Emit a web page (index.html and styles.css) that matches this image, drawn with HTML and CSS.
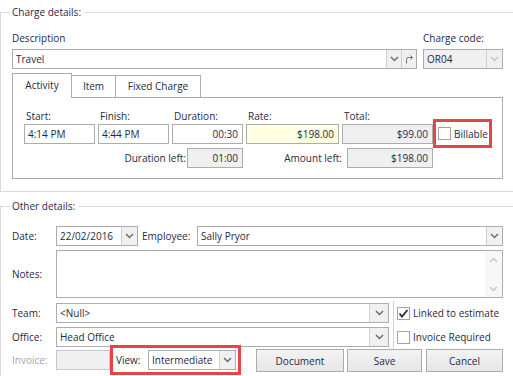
FILE: index.html
```html
<!DOCTYPE html>
<html>
<head>
    <title>Charge details</title>
    <link rel="stylesheet" href="styles.css">
</head>
<body>
    <!-- Charge details -->
    <div class="group charge-group">
        <div class="group-title">Charge details:</div>

        <div class="desc-grid">
            <label class="top-label">Description</label>
            <label class="top-label">Charge code:</label>
            <div class="combo">
                <span class="combo-text">Travel</span>
                <span class="combo-btn"><svg width="9" height="6" viewBox="0 0 9 6"><polyline points="1,1 4.5,4.5 8,1" fill="none" stroke="#6d6d6d" stroke-width="1.5"/></svg></span>
                <span class="combo-btn"><svg width="10" height="10" viewBox="0 0 10 10"><path d="M2.5 9.5 V5.5 Q2.5 3.5 4.5 3.5 H8.5" fill="none" stroke="#6d6d6d" stroke-width="1"/><polyline points="6.5,1.5 8.5,3.5 6.5,5.5" fill="none" stroke="#6d6d6d" stroke-width="1"/></svg></span>
            </div>
            <div class="combo combo-disabled">
                <span class="combo-text">OR04</span>
                <span class="combo-btn btn-wide"><svg width="9" height="6" viewBox="0 0 9 6"><polyline points="1,1 4.5,4.5 8,1" fill="none" stroke="#c6c6c6" stroke-width="1.5"/></svg></span>
            </div>
        </div>

        <div class="tabs">
            <div class="tab tab-activity active">Activity</div>
            <div class="tab tab-item">Item</div>
            <div class="tab tab-fixed">Fixed Charge</div>
        </div>
        <div class="tab-panel">
            <div class="field-row">
                <div class="field f-time">
                    <label>Start:</label>
                    <div class="edit">4:14 PM</div>
                </div>
                <div class="field f-time">
                    <label>Finish:</label>
                    <div class="edit">4:44 PM</div>
                </div>
                <div class="field f-time">
                    <label>Duration:</label>
                    <div class="edit num">00:30</div>
                </div>
                <div class="field f-rate">
                    <label>Rate:</label>
                    <div class="edit num rate">$198.00</div>
                </div>
                <div class="field f-total">
                    <label>Total:</label>
                    <div class="edit num readonly">$99.00</div>
                </div>
                <div class="highlight billable">
                    <span class="check"></span>
                    <span>Billable</span>
                </div>
            </div>
            <div class="left-row">
                <label class="dur-label">Duration left:</label>
                <div class="edit num readonly dur-left">01:00</div>
                <label class="amt-label">Amount left:</label>
                <div class="edit num readonly amt-left">$198.00</div>
            </div>
        </div>
    </div>

    <!-- Other details -->
    <div class="group other-group">
        <div class="group-title">Other details:</div>

        <div class="form-row date-row">
            <label class="row-label">Date:</label>
            <div class="combo date-combo">
                <span class="combo-text">22/02/2016</span>
                <span class="combo-btn btn-wide"><svg width="9" height="6" viewBox="0 0 9 6"><polyline points="1,1 4.5,4.5 8,1" fill="none" stroke="#6d6d6d" stroke-width="1.5"/></svg></span>
            </div>
            <label class="emp-label">Employee:</label>
            <div class="combo emp-combo">
                <span class="combo-text">Sally Pryor</span>
                <span class="combo-btn btn-wide"><svg width="9" height="6" viewBox="0 0 9 6"><polyline points="1,1 4.5,4.5 8,1" fill="none" stroke="#6d6d6d" stroke-width="1.5"/></svg></span>
            </div>
        </div>

        <div class="form-row notes-row">
            <label class="row-label">Notes:</label>
            <div class="memo">
                <div class="memo-text"></div>
                <div class="memo-scroll">
                    <svg width="9" height="6" viewBox="0 0 9 6"><polyline points="1,5 4.5,1.5 8,5" fill="none" stroke="#c6c6c6" stroke-width="1.5"/></svg>
                    <svg width="9" height="6" viewBox="0 0 9 6"><polyline points="1,1 4.5,4.5 8,1" fill="none" stroke="#c6c6c6" stroke-width="1.5"/></svg>
                </div>
            </div>
        </div>

        <div class="team-office">
            <div class="to-fields">
                <div class="form-row">
                    <label class="row-label">Team:</label>
                    <div class="combo to-combo">
                        <span class="combo-text">&lt;Null&gt;</span>
                        <span class="combo-btn btn-team"><svg width="9" height="6" viewBox="0 0 9 6"><polyline points="1,1 4.5,4.5 8,1" fill="none" stroke="#6d6d6d" stroke-width="1.5"/></svg></span>
                    </div>
                </div>
                <div class="form-row office-row">
                    <label class="row-label">Office:</label>
                    <div class="combo to-combo">
                        <span class="combo-text">Head Office</span>
                        <span class="combo-btn btn-team"><svg width="9" height="6" viewBox="0 0 9 6"><polyline points="1,1 4.5,4.5 8,1" fill="none" stroke="#6d6d6d" stroke-width="1.5"/></svg></span>
                    </div>
                </div>
            </div>
            <div class="to-checks">
                <div class="check-item">
                    <span class="check"><svg width="11" height="11" viewBox="0 0 11 11"><polyline points="1.5,5.5 4,8.5 9.5,2" fill="none" stroke="#2b2b2b" stroke-width="1.8"/></svg></span>
                    <span>Linked to estimate</span>
                </div>
                <div class="check-item">
                    <span class="check"></span>
                    <span>Invoice Required</span>
                </div>
            </div>
        </div>

        <div class="bottom-row">
            <label class="row-label disabled">Invoice:</label>
            <div class="invoice-edit"></div>
            <div class="highlight view-box">
                <label class="view-label">View:</label>
                <div class="combo view-combo">
                    <span class="combo-text">Intermediate</span>
                    <span class="combo-btn btn-wide"><svg width="9" height="6" viewBox="0 0 9 6"><polyline points="1,1 4.5,4.5 8,1" fill="none" stroke="#6d6d6d" stroke-width="1.5"/></svg></span>
                </div>
            </div>
            <div class="buttons">
                <button class="btn-document">Document</button>
                <button class="btn-save">Save</button>
                <button class="btn-cancel">Cancel</button>
            </div>
        </div>
    </div>
</body>
</html>
```

FILE: styles.css
```css
body {
    margin: 0;
    width: 513px;
    height: 376px;
    overflow: hidden;
    font-family: "Open Sans", sans-serif;
    font-size: 10px;
    color: #1f2a44;
    background-color: #fff;
}

label {
    display: block;
}

/* group boxes */
.group {
    border: 1px solid #dadada;
    border-right: none;
    padding: 0 10px 12px 11px;
}

.charge-group {
    margin-top: 12px;
}

.other-group {
    margin-top: 14px;
    border-bottom: none;
}

.group-title {
    width: max-content;
    margin: -8px 0 0 -2px;
    padding: 0 4px 0 2px;
    line-height: 15px;
    background-color: #fff;
}

/* combo boxes and edits */
.combo {
    display: flex;
    height: 20px;
    box-sizing: border-box;
    border: 1px solid #abadb3;
    background-color: #fff;
}

.combo-text {
    flex: 1;
    padding-left: 3px;
    line-height: 18px;
    white-space: nowrap;
    overflow: hidden;
}

.combo-btn {
    width: 15px;
    flex: none;
    box-sizing: border-box;
    border-left: 1px solid #cfcfcf;
    background-color: #f0f0f0;
    display: flex;
    align-items: center;
    justify-content: center;
}

.combo-btn.btn-wide {
    width: 16px;
}

.combo-btn.btn-team {
    width: 19px;
}

.combo-disabled {
    background-color: #f0f0f0;
}

.edit {
    height: 20px;
    box-sizing: border-box;
    border: 1px solid #abadb3;
    padding: 0 3px;
    line-height: 18px;
    white-space: nowrap;
    background-color: #fff;
}

.edit.num {
    text-align: right;
    padding-right: 4px;
}

.edit.readonly {
    background-color: #f0f0f0;
}

.edit.rate {
    background-color: #ffffe1;
}

.check {
    width: 13px;
    height: 13px;
    flex: none;
    box-sizing: border-box;
    border: 1px solid #a3a3a3;
    background-color: #fff;
    margin-right: 3px;
    display: flex;
    align-items: center;
    justify-content: center;
}

.highlight {
    border: 3px solid #e64545;
    box-sizing: border-box;
}

/* description row */
.desc-grid {
    display: grid;
    grid-template-columns: 1fr 80px;
    column-gap: 6px;
    row-gap: 4px;
    margin-top: 11px;
}

.top-label {
    line-height: 14px;
}

/* tabs */
.tabs {
    display: flex;
    align-items: flex-end;
    margin-top: 4px;
}

.tab {
    height: 22px;
    box-sizing: border-box;
    border: 1px solid #acacac;
    border-bottom: none;
    margin-left: -1px;
    line-height: 20px;
    text-align: center;
    background-color: #fff;
}

.tab.active {
    height: 25px;
    margin-left: 0;
    margin-bottom: -1px;
    line-height: 22px;
    position: relative;
    z-index: 1;
}

.tab-activity { width: 60px; }
.tab-item { width: 45px; }
.tab-fixed { width: 86px; }

.tab-panel {
    border: 1px solid #acacac;
    padding: 11px 10px 10px 11px;
}

.field-row {
    display: flex;
    align-items: flex-end;
}

.field {
    margin-right: 3px;
}

.field label {
    line-height: 15px;
    padding-left: 2px;
}

.f-time { width: 71px; }
.f-rate { width: 93px; }
.f-total { width: 91px; margin-right: 0; }

.billable {
    width: 59px;
    height: 29px;
    margin-bottom: -4px;
    padding-left: 2px;
    display: flex;
    align-items: center;
}

.left-row {
    display: flex;
    align-items: center;
    margin-top: 4px;
}

.dur-label {
    width: 162px;
    margin-right: 1px;
    text-align: right;
}

.dur-left { width: 56px; }

.amt-label {
    width: 99px;
    margin-right: 5px;
    text-align: right;
}

.amt-left { width: 86px; }

/* other details */
.form-row {
    display: flex;
    align-items: center;
}

.row-label {
    width: 44px;
    flex: none;
}

.row-label.disabled {
    color: #a3a3a3;
}

.date-row {
    margin-top: 12px;
}

.date-combo {
    width: 82px;
}

.emp-label {
    width: 55px;
    margin-left: 4px;
}

.emp-combo {
    flex: 1;
}

.notes-row {
    margin-top: 4px;
}

.memo {
    flex: 1;
    height: 48px;
    box-sizing: border-box;
    border: 1px solid #abadb3;
    display: flex;
}

.memo-text {
    flex: 1;
}

.memo-scroll {
    width: 17px;
    background-color: #f7f7f7;
    display: flex;
    flex-direction: column;
    align-items: center;
    justify-content: space-between;
    padding: 6px 0 5px;
}

.team-office {
    display: flex;
    margin-top: 5px;
}

.to-fields {
    width: 377px;
}

.office-row {
    margin-top: 4px;
}

.to-combo {
    flex: 1;
}

.to-checks {
    margin: -2px 0 -2px 4px;
    padding: 2px 0 2px 3px;
    border-left: 1px solid #d4d4d4;
}

.check-item {
    display: flex;
    align-items: center;
    height: 20px;
}

.check-item + .check-item {
    margin-top: 4px;
}

.bottom-row {
    display: flex;
    align-items: center;
    margin-top: -2px;
}

.invoice-edit {
    width: 54px;
    height: 20px;
    box-sizing: border-box;
    border: 1px solid #c8c8c8;
    background-color: #f0f0f0;
}

.view-box {
    width: 131px;
    height: 30px;
    padding-left: 3px;
    display: flex;
    align-items: center;
}

.view-label {
    width: 32px;
}

.view-combo {
    width: 88px;
}

.buttons {
    display: flex;
    margin-left: auto;
    margin-top: 1px;
}

button {
    height: 23px;
    box-sizing: border-box;
    border: 1px solid #acacac;
    background: linear-gradient(#f3f3f3, #e6e6e6);
    font-family: "Open Sans", sans-serif;
    font-size: 10px;
    color: #1f2a44;
    padding: 0;
}

.btn-document { width: 88px; margin-right: 3px; }
.btn-save { width: 75px; margin-right: 4px; }
.btn-cancel { width: 77px; }
```
